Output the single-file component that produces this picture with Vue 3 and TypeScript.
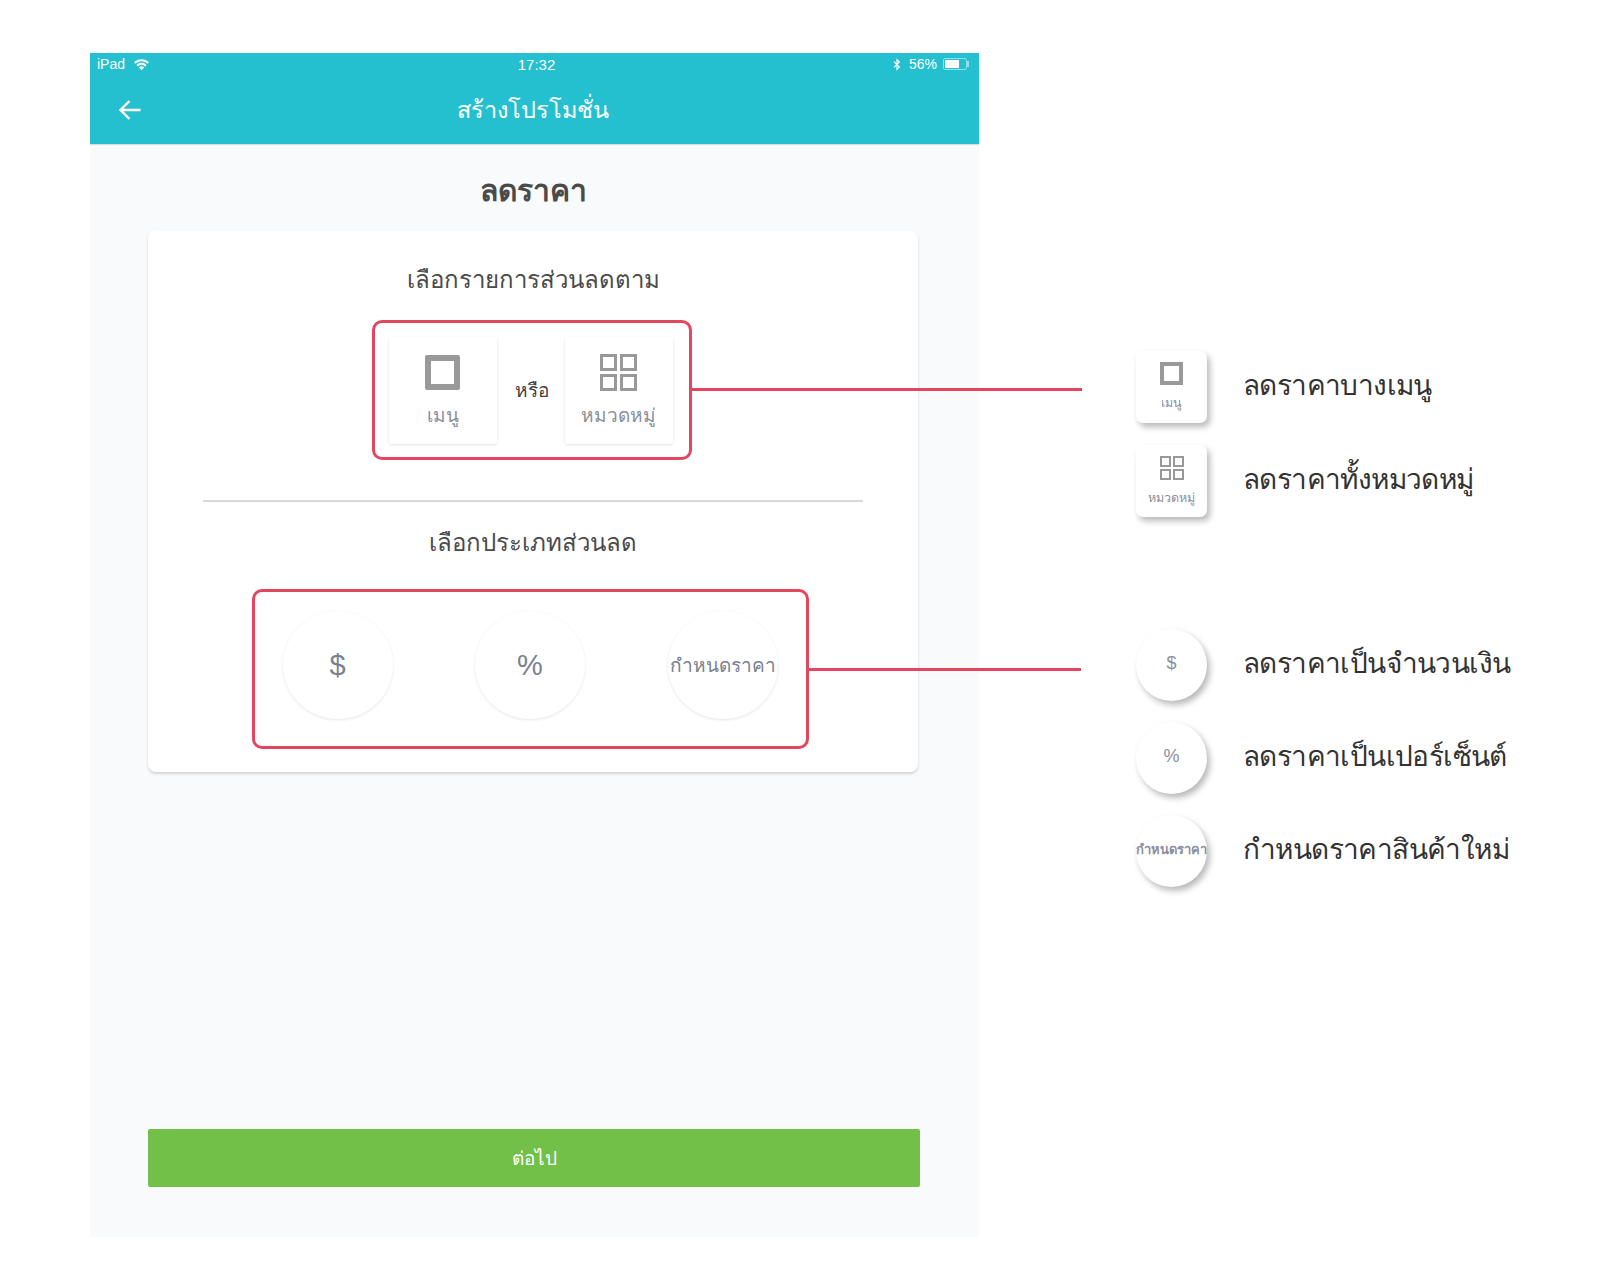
<script setup lang="ts">
const discountTypes = [
  { id: "amount", label: "$", small: false },
  { id: "percent", label: "%", small: false },
  { id: "fixed", label: "กำหนดราคา", small: true },
];

const legendTargets = [
  { id: "menu", label: "เมนู", text: "ลดราคาบางเมนู", icon: "single" },
  { id: "category", label: "หมวดหมู่", text: "ลดราคาทั้งหมวดหมู่", icon: "grid" },
];

const legendTypes = [
  { id: "amount", label: "$", text: "ลดราคาเป็นจำนวนเงิน", small: false },
  { id: "percent", label: "%", text: "ลดราคาเป็นเปอร์เซ็นต์", small: false },
  { id: "fixed", label: "กำหนดราคา", text: "กำหนดราคาสินค้าใหม่", small: true },
];
</script>

<template>
  <div class="page">
    <section class="phone">
      <header class="topbar">
        <div class="status">
          <div class="status-left">
            <span>iPad</span>
            <svg class="wifi" viewBox="0 0 16 12" width="17" height="13">
              <path d="M8 11.5 5.6 8.8a3.4 3.4 0 0 1 4.8 0Z" fill="#fff" />
              <path d="M3.9 7.1a5.8 5.8 0 0 1 8.2 0M1.6 4.6a9 9 0 0 1 12.8 0" fill="none" stroke="#fff" stroke-width="1.9" />
            </svg>
          </div>
          <span class="status-time">17:32</span>
          <div class="status-right">
            <svg class="bluetooth" viewBox="0 0 8 13" width="8" height="13">
              <path d="M1 3.6 6.4 9 4 11.4V1.6L6.4 4 1 9.4" fill="none" stroke="#fff" stroke-width="1.1" />
            </svg>
            <span>56%</span>
            <div class="battery"><div class="battery-fill"></div></div>
          </div>
        </div>
        <div class="navbar">
          <svg class="back" viewBox="0 0 24 24" width="24" height="24">
            <path d="M22.5 12H3M11.5 3 2.5 12l9 9" fill="none" stroke="#fff" stroke-width="2.4" />
          </svg>
          <h1>สร้างโปรโมชั่น</h1>
        </div>
      </header>

      <main class="content">
        <h2 class="title">ลดราคา</h2>
        <div class="card">
          <h3 class="card-heading">เลือกรายการส่วนลดตาม</h3>
          <div class="callout callout-target">
            <div class="tile">
              <div class="icon-single"></div>
              <span>เมนู</span>
            </div>
            <span class="or">หรือ</span>
            <div class="tile">
              <div class="icon-grid"><i></i><i></i><i></i><i></i></div>
              <span>หมวดหมู่</span>
            </div>
            <div class="connector connector-target"></div>
          </div>
          <div class="divider"></div>
          <h3 class="card-heading heading-type">เลือกประเภทส่วนลด</h3>
          <div class="callout callout-type">
            <div v-for="item in discountTypes" :key="item.id" class="circle" :class="{ 'circle-text': item.small }">
              {{ item.label }}
            </div>
            <div class="connector connector-type"></div>
          </div>
        </div>
        <button class="next" type="button">ต่อไป</button>
      </main>
    </section>

    <aside class="legend">
      <div class="legend-group group-target">
        <div v-for="item in legendTargets" :key="item.id" class="legend-row">
          <div class="mini-tile">
            <div :class="item.icon === 'single' ? 'mini-single' : 'mini-grid'">
              <template v-if="item.icon === 'grid'"><i></i><i></i><i></i><i></i></template>
            </div>
            <span>{{ item.label }}</span>
          </div>
          <span class="legend-text">{{ item.text }}</span>
        </div>
      </div>
      <div class="legend-group group-type">
        <div v-for="item in legendTypes" :key="item.id" class="legend-row">
          <div class="mini-circle" :class="{ 'mini-circle-text': item.small }">{{ item.label }}</div>
          <span class="legend-text">{{ item.text }}</span>
        </div>
      </div>
    </aside>
  </div>
</template>

<style scoped>
.page {
  width: 1600px;
  height: 1280px;
  box-sizing: border-box;
  padding: 53px 0 0 90px;
  display: flex;
  background: #fff;
  font-family: "Noto Sans", "DejaVu Sans", "Liberation Sans", sans-serif;
  overflow: hidden;
}

.phone {
  width: 889px;
  height: 1184px;
  display: flex;
  flex-direction: column;
  background: #f9fafc;
}

.topbar {
  height: 91px;
  background: #25c0d0;
  color: #fff;
  box-shadow: 0 1px 1px rgba(0, 0, 0, 0.12);
}

.status {
  height: 22px;
  padding: 0 12px 0 7px;
  display: flex;
  align-items: center;
  justify-content: space-between;
  font-family: "Liberation Sans", sans-serif;
  font-size: 14px;
  position: relative;
}

.status-left {
  display: flex;
  align-items: center;
  gap: 8px;
}

.status-right {
  display: flex;
  align-items: center;
  gap: 6px;
}

.bluetooth {
  margin-right: 2px;
}

.status-time {
  position: absolute;
  left: 0;
  right: -4px;
  text-align: center;
  font-size: 15px;
}

.battery {
  position: relative;
  width: 24px;
  height: 12px;
  box-sizing: border-box;
  border: 1px solid rgba(255, 255, 255, 0.5);
  border-radius: 2px;
  padding: 1px;
}

.battery::after {
  content: "";
  position: absolute;
  left: 100%;
  top: 2px;
  width: 2px;
  height: 6px;
  margin-left: 1px;
  background: rgba(255, 255, 255, 0.5);
}

.battery-fill {
  width: 14px;
  height: 100%;
  background: #fff;
}

.navbar {
  height: 69px;
  display: flex;
  align-items: center;
  justify-content: center;
  position: relative;
}

.back {
  position: absolute;
  left: 28px;
  top: 23px;
}

.navbar h1 {
  margin: 0 3px 1px 0;
  font-size: 23.5px;
  font-weight: 400;
}

.content {
  flex: 1;
  display: flex;
  flex-direction: column;
  align-items: center;
  padding: 0 59px 50px 56px;
}

.title {
  margin: 0;
  height: 87px;
  box-sizing: border-box;
  padding-top: 6px;
  display: flex;
  align-items: center;
  font-size: 30px;
  font-weight: 700;
  color: #4a4a4a;
}

.card {
  width: 770px;
  height: 541px;
  flex-shrink: 0;
  background: #fff;
  border-radius: 8px;
  box-shadow: 0 2px 3px rgba(0, 0, 0, 0.15);
  display: flex;
  flex-direction: column;
  align-items: center;
  padding-top: 30px;
  box-sizing: border-box;
}

.card-heading {
  margin: 0;
  height: 36px;
  line-height: 36px;
  font-size: 24px;
  font-weight: 400;
  color: #4a4a4a;
}

.callout {
  position: relative;
  box-sizing: border-box;
  border: 3px solid #e3475f;
  border-radius: 10px;
  background: #fff;
  display: flex;
  align-items: center;
  margin-right: 3px;
}

.callout-target {
  width: 320px;
  height: 140px;
  margin-top: 23px;
  padding: 0 16px 0 14px;
  justify-content: space-between;
}

.callout-type {
  width: 557px;
  height: 160px;
  margin-top: 29px;
  margin-right: 6px;
  padding: 0 28px 8px;
  justify-content: space-between;
}

.connector {
  position: absolute;
  left: 100%;
  top: 50%;
  height: 3px;
  background: #e3475f;
}

.connector-target {
  width: 393px;
  margin-top: -2px;
}

.connector-type {
  width: 275px;
  margin-top: -1px;
}

.tile {
  width: 108px;
  height: 107px;
  background: #fff;
  border-radius: 3px;
  box-shadow: 0 1px 3px rgba(0, 0, 0, 0.12);
  box-sizing: border-box;
  padding-top: 18px;
  display: flex;
  flex-direction: column;
  align-items: center;
  font-size: 19px;
  color: #8a8f9c;
}

.tile span {
  margin-top: 10px;
}

.icon-single {
  width: 35px;
  height: 35px;
  box-sizing: border-box;
  border: 6px solid #999;
  border-radius: 2px;
}

.icon-grid {
  width: 37px;
  height: 37px;
  margin-top: -1px;
  margin-bottom: -1px;
  display: grid;
  grid-template-columns: 17px 17px;
  grid-template-rows: 17px 17px;
  gap: 3px;
}

.icon-grid i {
  box-sizing: border-box;
  border: 3px solid #999;
}

.or {
  margin-left: 3px;
  font-size: 19px;
  color: #3f3f3f;
}

.divider {
  width: 660px;
  height: 2px;
  background: #d9d9d9;
  margin-top: 40px;
}

.heading-type {
  margin-top: 22px;
}

.circle {
  width: 110px;
  height: 108px;
  border-radius: 50%;
  background: #fff;
  box-shadow: 0 1px 3px rgba(0, 0, 0, 0.1);
  display: flex;
  align-items: center;
  justify-content: center;
  font-family: "Liberation Sans", sans-serif;
  font-size: 29px;
  color: #7a8090;
  white-space: nowrap;
}

.circle-text {
  font-family: "Noto Sans", sans-serif;
  font-weight: 500;
  font-size: 19px;
}

.next {
  width: 772px;
  height: 58px;
  flex-shrink: 0;
  margin-top: auto;
  margin-left: 2px;
  border: 0;
  border-radius: 2px;
  background: #72c047;
  color: #fff;
  font-family: inherit;
  font-size: 19px;
}

.legend {
  margin-left: 157px;
  padding-top: 298px;
  display: flex;
  flex-direction: column;
}

.legend-group {
  display: flex;
  flex-direction: column;
}

.group-target {
  gap: 22px;
}

.group-type {
  margin-top: 112px;
  gap: 21px;
}

.legend-row {
  height: 72px;
  display: flex;
  align-items: center;
  gap: 36px;
}

.mini-tile {
  width: 71px;
  height: 72px;
  box-sizing: border-box;
  padding-top: 11px;
  background: #fff;
  border-radius: 7px;
  box-shadow: 3px 4px 6px rgba(0, 0, 0, 0.28);
  display: flex;
  flex-direction: column;
  align-items: center;
  gap: 8px;
  font-size: 12.5px;
  color: #8a8f9c;
}

.mini-single {
  width: 23px;
  height: 23px;
  box-sizing: border-box;
  border: 4px solid #999;
}

.mini-grid {
  width: 24px;
  height: 24px;
  display: grid;
  grid-template-columns: 11px 11px;
  grid-template-rows: 11px 11px;
  gap: 2px;
}

.mini-grid i {
  box-sizing: border-box;
  border: 2px solid #999;
}

.mini-circle {
  width: 71px;
  height: 72px;
  box-sizing: border-box;
  padding-bottom: 3px;
  flex-shrink: 0;
  border-radius: 50%;
  background: #fff;
  box-shadow: 3px 4px 6px rgba(0, 0, 0, 0.28);
  display: flex;
  align-items: center;
  justify-content: center;
  font-family: "Liberation Sans", sans-serif;
  font-size: 18px;
  color: #8a8f9c;
  white-space: nowrap;
}

.mini-circle-text {
  font-family: "Noto Sans", sans-serif;
  font-size: 13px;
  font-weight: 700;
}

.legend-text {
  margin-bottom: 5px;
  font-size: 28px;
  font-weight: 300;
  letter-spacing: -0.6px;
  color: #333;
  white-space: nowrap;
}
</style>
